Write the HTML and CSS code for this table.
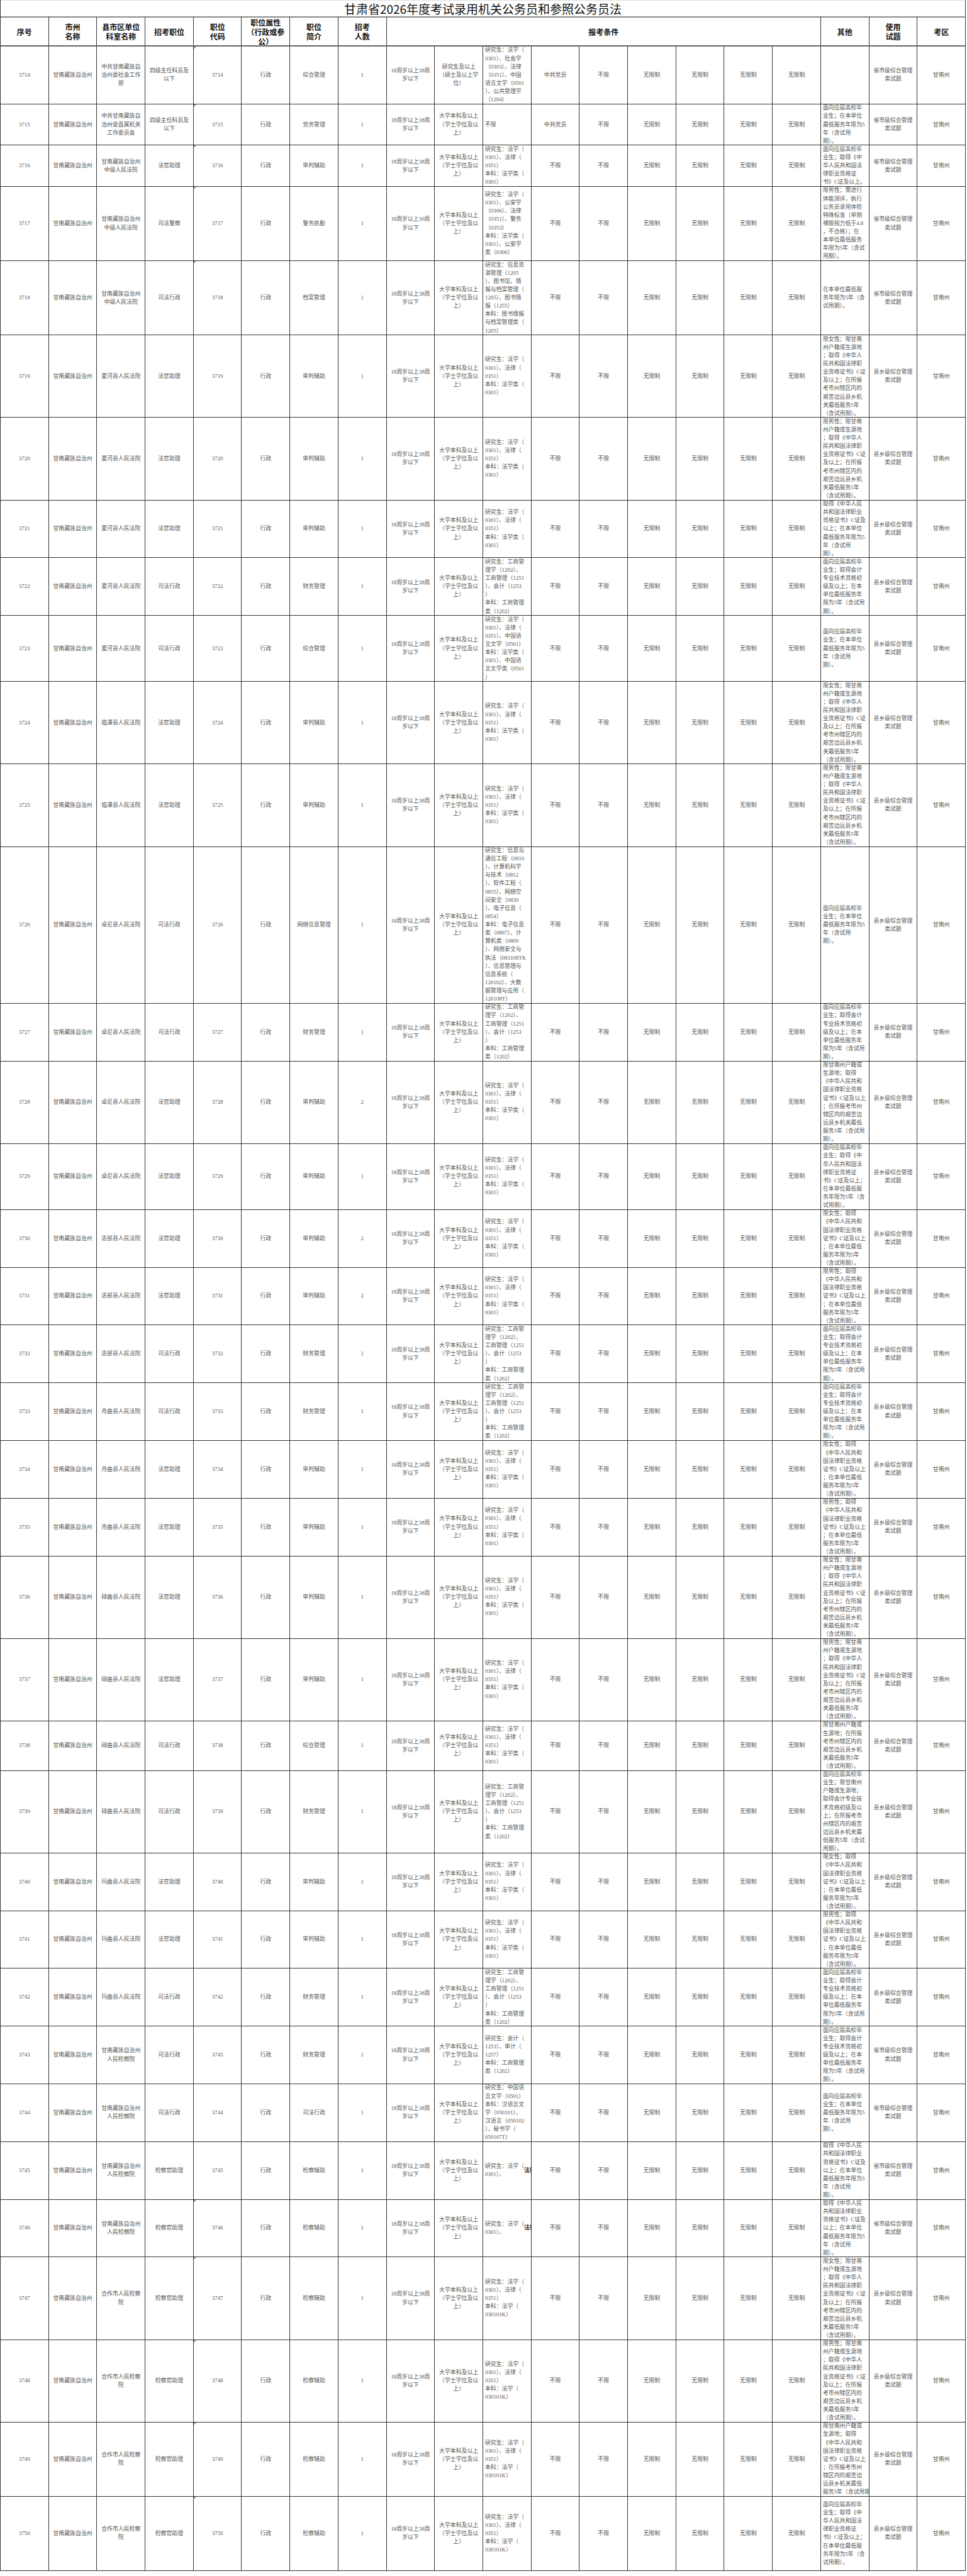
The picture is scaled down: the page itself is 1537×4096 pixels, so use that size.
FILE: index.html
```html
<!DOCTYPE html>
<html lang="zh-CN">
<head>
<meta charset="utf-8">
<title>甘肃省2026年度考试录用机关公务员职位表</title>
<link rel="stylesheet" href="styles.css">
</head>
<body>
<div class="sheet">
<div class="title">甘肃省2026年度考试录用机关公务员和参照公务员法</div>

<div class="row head">
<div class="c">序号</div>
<div class="c">市州<br>名称</div>
<div class="c">县市区单位<br>科室名称</div>
<div class="c">招考职位</div>
<div class="c">职位<br>代码</div>
<div class="c">职位属性<br>（行政或参<br>公）</div>
<div class="c">职位<br>简介</div>
<div class="c">招考<br>人数</div>
<div class="c span9">报考条件</div>
<div class="c">其他</div>
<div class="c">使用<br>试题</div>
<div class="c">考区</div>
</div>

<div class="row l7">
<div class="c">3714</div><div class="c">甘南藏族自治州</div><div class="c">中共甘南藏族自<br>治州委社会工作<br>部</div><div class="c">四级主任科员及<br>以下</div><div class="c tri">3714</div><div class="c">行政</div><div class="c">综合管理</div><div class="c">1</div><div class="c">18周岁以上38周<br>岁以下</div><div class="c">研究生及以上<br>（硕士及以上学<br>位）</div>
<div class="c l">研究生：法学（<br>0301）、社会学<br>（0303）、法律<br>（0351）、中国<br>语言文学（0501<br>）、公共管理学<br>（1204）</div>
<div class="c">中共党员</div><div class="c">不限</div><div class="c">无限制</div><div class="c">无限制</div><div class="c">无限制</div><div class="c">无限制</div>
<div class="c l"></div><div class="c">省市级综合管理<br>类试题</div><div class="c">甘南州</div>
</div>

<div class="row l5">
<div class="c">3715</div><div class="c">甘南藏族自治州</div><div class="c">中共甘南藏族自<br>治州委直属机关<br>工作委员会</div><div class="c">四级主任科员及<br>以下</div><div class="c tri">3715</div><div class="c">行政</div><div class="c">党务管理</div><div class="c">1</div><div class="c">18周岁以上38周<br>岁以下</div><div class="c">大学本科及以上<br>（学士学位及以<br>上）</div>
<div class="c l">不限</div>
<div class="c">中共党员</div><div class="c">不限</div><div class="c">无限制</div><div class="c">无限制</div><div class="c">无限制</div><div class="c">无限制</div>
<div class="c l">面向应届高校毕<br>业生；在本单位<br>最低服务年限为5<br>年（含试用<br>期）。</div><div class="c">省市级综合管理<br>类试题</div><div class="c">甘南州</div>
</div>

<div class="row l5">
<div class="c">3716</div><div class="c">甘南藏族自治州</div><div class="c">甘南藏族自治州<br>中级人民法院</div><div class="c">法官助理</div><div class="c tri">3716</div><div class="c">行政</div><div class="c">审判辅助</div><div class="c">1</div><div class="c">18周岁以上38周<br>岁以下</div><div class="c">大学本科及以上<br>（学士学位及以<br>上）</div>
<div class="c l">研究生：法学（<br>0301）、法律（<br>0351）<br>本科：法学类（<br>0301）</div>
<div class="c">不限</div><div class="c">不限</div><div class="c">无限制</div><div class="c">无限制</div><div class="c">无限制</div><div class="c">无限制</div>
<div class="c l">面向应届高校毕<br>业生；取得《中<br>华人民共和国法<br>律职业资格证<br>书》C证及以上。</div><div class="c">省市级综合管理<br>类试题</div><div class="c">甘南州</div>
</div>

<div class="row l9">
<div class="c">3717</div><div class="c">甘南藏族自治州</div><div class="c">甘南藏族自治州<br>中级人民法院</div><div class="c">司法警察</div><div class="c tri">3717</div><div class="c">行政</div><div class="c">警务执勤</div><div class="c">1</div><div class="c">18周岁以上30周<br>岁以下</div><div class="c">大学本科及以上<br>（学士学位及以<br>上）</div>
<div class="c l">研究生：法学（<br>0301）、公安学<br>（0306）、法律<br>（0351）、警务<br>（0353）<br>本科：法学类（<br>0301）、公安学<br>类（0306）</div>
<div class="c">不限</div><div class="c">不限</div><div class="c">无限制</div><div class="c">无限制</div><div class="c">无限制</div><div class="c">无限制</div>
<div class="c l">限男性；需进行<br>体能测评，执行<br>公务员录用体检<br>特殊标准（单侧<br>裸眼视力低于4.8<br>，不合格）；在<br>本单位最低服务<br>年限为5年（含试<br>用期）。</div><div class="c">省市级综合管理<br>类试题</div><div class="c">甘南州</div>
</div>

<div class="row l9">
<div class="c">3718</div><div class="c">甘南藏族自治州</div><div class="c">甘南藏族自治州<br>中级人民法院</div><div class="c">司法行政</div><div class="c tri">3718</div><div class="c">行政</div><div class="c">档案管理</div><div class="c">1</div><div class="c">18周岁以上38周<br>岁以下</div><div class="c">大学本科及以上<br>（学士学位及以<br>上）</div>
<div class="c l">研究生：信息资<br>源管理（1205<br>）、图书馆、情<br>报与档案管理（<br>1205）、图书情<br>报（1255）<br>本科：图书情报<br>与档案管理类（<br>1205）</div>
<div class="c">不限</div><div class="c">不限</div><div class="c">无限制</div><div class="c">无限制</div><div class="c">无限制</div><div class="c">无限制</div>
<div class="c l">在本单位最低服<br>务年限为5年（含<br>试用期）。</div><div class="c">省市级综合管理<br>类试题</div><div class="c">甘南州</div>
</div>

<div class="row l10">
<div class="c">3719</div><div class="c">甘南藏族自治州</div><div class="c">夏河县人民法院</div><div class="c">法官助理</div><div class="c">3719</div><div class="c">行政</div><div class="c">审判辅助</div><div class="c">1</div><div class="c">18周岁以上38周<br>岁以下</div><div class="c">大学本科及以上<br>（学士学位及以<br>上）</div>
<div class="c l">研究生：法学（<br>0301）、法律（<br>0351）<br>本科：法学类（<br>0301）</div>
<div class="c">不限</div><div class="c">不限</div><div class="c">无限制</div><div class="c">无限制</div><div class="c">无限制</div><div class="c">无限制</div>
<div class="c l">限女性；限甘南<br>州户籍或生源地<br>；取得《中华人<br>民共和国法律职<br>业资格证书》C证<br>及以上；在所报<br>考市州辖区内的<br>艰苦边远县乡机<br>关最低服务5年<br>（含试用期）。</div><div class="c">县乡级综合管理<br>类试题</div><div class="c">甘南州</div>
</div>

<div class="row l10">
<div class="c">3720</div><div class="c">甘南藏族自治州</div><div class="c">夏河县人民法院</div><div class="c">法官助理</div><div class="c">3720</div><div class="c">行政</div><div class="c">审判辅助</div><div class="c">1</div><div class="c">18周岁以上38周<br>岁以下</div><div class="c">大学本科及以上<br>（学士学位及以<br>上）</div>
<div class="c l">研究生：法学（<br>0301）、法律（<br>0351）<br>本科：法学类（<br>0301）</div>
<div class="c">不限</div><div class="c">不限</div><div class="c">无限制</div><div class="c">无限制</div><div class="c">无限制</div><div class="c">无限制</div>
<div class="c l">限男性；限甘南<br>州户籍或生源地<br>；取得《中华人<br>民共和国法律职<br>业资格证书》C证<br>及以上；在所报<br>考市州辖区内的<br>艰苦边远县乡机<br>关最低服务5年<br>（含试用期）。</div><div class="c">县乡级综合管理<br>类试题</div><div class="c">甘南州</div>
</div>

<div class="row l7">
<div class="c">3721</div><div class="c">甘南藏族自治州</div><div class="c">夏河县人民法院</div><div class="c">法官助理</div><div class="c">3721</div><div class="c">行政</div><div class="c">审判辅助</div><div class="c">1</div><div class="c">18周岁以上38周<br>岁以下</div><div class="c">大学本科及以上<br>（学士学位及以<br>上）</div>
<div class="c l">研究生：法学（<br>0301）、法律（<br>0351）<br>本科：法学类（<br>0301）</div>
<div class="c">不限</div><div class="c">不限</div><div class="c">无限制</div><div class="c">无限制</div><div class="c">无限制</div><div class="c">无限制</div>
<div class="c l">取得《中华人民<br>共和国法律职业<br>资格证书》C证及<br>以上；在本单位<br>最低服务年限为5<br>年（含试用<br>期）。</div><div class="c">县乡级综合管理<br>类试题</div><div class="c">甘南州</div>
</div>

<div class="row l7">
<div class="c">3722</div><div class="c">甘南藏族自治州</div><div class="c">夏河县人民法院</div><div class="c">司法行政</div><div class="c">3722</div><div class="c">行政</div><div class="c">财务管理</div><div class="c">1</div><div class="c">18周岁以上38周<br>岁以下</div><div class="c">大学本科及以上<br>（学士学位及以<br>上）</div>
<div class="c l">研究生：工商管<br>理学（1202）、<br>工商管理（1251<br>）、会计（1253<br>）<br>本科：工商管理<br>类（1202）</div>
<div class="c">不限</div><div class="c">不限</div><div class="c">无限制</div><div class="c">无限制</div><div class="c">无限制</div><div class="c">无限制</div>
<div class="c l">面向应届高校毕<br>业生；取得会计<br>专业技术资格初<br>级及以上；在本<br>单位最低服务年<br>限为5年（含试用<br>期）。</div><div class="c">县乡级综合管理<br>类试题</div><div class="c">甘南州</div>
</div>

<div class="row l8">
<div class="c">3723</div><div class="c">甘南藏族自治州</div><div class="c">夏河县人民法院</div><div class="c">司法行政</div><div class="c">3723</div><div class="c">行政</div><div class="c">综合管理</div><div class="c">1</div><div class="c">18周岁以上38周<br>岁以下</div><div class="c">大学本科及以上<br>（学士学位及以<br>上）</div>
<div class="c l">研究生：法学（<br>0301）、法律（<br>0351）、中国语<br>言文学（0501）<br>本科：法学类（<br>0301）、中国语<br>言文学类（0501<br>）</div>
<div class="c">不限</div><div class="c">不限</div><div class="c">无限制</div><div class="c">无限制</div><div class="c">无限制</div><div class="c">无限制</div>
<div class="c l">面向应届高校毕<br>业生；在本单位<br>最低服务年限为5<br>年（含试用<br>期）。</div><div class="c">县乡级综合管理<br>类试题</div><div class="c">甘南州</div>
</div>

<div class="row l10">
<div class="c">3724</div><div class="c">甘南藏族自治州</div><div class="c">临潭县人民法院</div><div class="c">法官助理</div><div class="c">3724</div><div class="c">行政</div><div class="c">审判辅助</div><div class="c">1</div><div class="c">18周岁以上38周<br>岁以下</div><div class="c">大学本科及以上<br>（学士学位及以<br>上）</div>
<div class="c l">研究生：法学（<br>0301）、法律（<br>0351）<br>本科：法学类（<br>0301）</div>
<div class="c">不限</div><div class="c">不限</div><div class="c">无限制</div><div class="c">无限制</div><div class="c">无限制</div><div class="c">无限制</div>
<div class="c l">限女性；限甘南<br>州户籍或生源地<br>；取得《中华人<br>民共和国法律职<br>业资格证书》C证<br>及以上；在所报<br>考市州辖区内的<br>艰苦边远县乡机<br>关最低服务5年<br>（含试用期）。</div><div class="c">县乡级综合管理<br>类试题</div><div class="c">甘南州</div>
</div>

<div class="row l10">
<div class="c">3725</div><div class="c">甘南藏族自治州</div><div class="c">临潭县人民法院</div><div class="c">法官助理</div><div class="c">3725</div><div class="c">行政</div><div class="c">审判辅助</div><div class="c">1</div><div class="c">18周岁以上38周<br>岁以下</div><div class="c">大学本科及以上<br>（学士学位及以<br>上）</div>
<div class="c l">研究生：法学（<br>0301）、法律（<br>0351）<br>本科：法学类（<br>0301）</div>
<div class="c">不限</div><div class="c">不限</div><div class="c">无限制</div><div class="c">无限制</div><div class="c">无限制</div><div class="c">无限制</div>
<div class="c l">限男性；限甘南<br>州户籍或生源地<br>；取得《中华人<br>民共和国法律职<br>业资格证书》C证<br>及以上；在所报<br>考市州辖区内的<br>艰苦边远县乡机<br>关最低服务5年<br>（含试用期）。</div><div class="c">县乡级综合管理<br>类试题</div><div class="c">甘南州</div>
</div>

<div class="row l19">
<div class="c">3726</div><div class="c">甘南藏族自治州</div><div class="c">卓尼县人民法院</div><div class="c">司法行政</div><div class="c">3726</div><div class="c">行政</div><div class="c">网络信息管理</div><div class="c">1</div><div class="c">18周岁以上38周<br>岁以下</div><div class="c">大学本科及以上<br>（学士学位及以<br>上）</div>
<div class="c l">研究生：信息与<br>通信工程（0810<br>）、计算机科学<br>与技术（0812<br>）、软件工程（<br>0835）、网络空<br>间安全（0839<br>）、电子信息（<br>0854）<br>本科：电子信息<br>类（0807）、计<br>算机类（0809<br>）、网络安全与<br>执法（083108TK<br>）、信息管理与<br>信息系统（<br>120102）、大数<br>据管理与应用（<br>120108T）</div>
<div class="c">不限</div><div class="c">不限</div><div class="c">无限制</div><div class="c">无限制</div><div class="c">无限制</div><div class="c">无限制</div>
<div class="c l">面向应届高校毕<br>业生；在本单位<br>最低服务年限为5<br>年（含试用<br>期）。</div><div class="c">县乡级综合管理<br>类试题</div><div class="c">甘南州</div>
</div>

<div class="row l7">
<div class="c">3727</div><div class="c">甘南藏族自治州</div><div class="c">卓尼县人民法院</div><div class="c">司法行政</div><div class="c">3727</div><div class="c">行政</div><div class="c">财务管理</div><div class="c">1</div><div class="c">18周岁以上38周<br>岁以下</div><div class="c">大学本科及以上<br>（学士学位及以<br>上）</div>
<div class="c l">研究生：工商管<br>理学（1202）、<br>工商管理（1251<br>）、会计（1253<br>）<br>本科：工商管理<br>类（1202）</div>
<div class="c">不限</div><div class="c">不限</div><div class="c">无限制</div><div class="c">无限制</div><div class="c">无限制</div><div class="c">无限制</div>
<div class="c l">面向应届高校毕<br>业生；取得会计<br>专业技术资格初<br>级及以上；在本<br>单位最低服务年<br>限为5年（含试用<br>期）。</div><div class="c">县乡级综合管理<br>类试题</div><div class="c">甘南州</div>
</div>

<div class="row l10">
<div class="c">3728</div><div class="c">甘南藏族自治州</div><div class="c">卓尼县人民法院</div><div class="c">法官助理</div><div class="c">3728</div><div class="c">行政</div><div class="c">审判辅助</div><div class="c">2</div><div class="c">18周岁以上38周<br>岁以下</div><div class="c">大学本科及以上<br>（学士学位及以<br>上）</div>
<div class="c l">研究生：法学（<br>0301）、法律（<br>0351）<br>本科：法学类（<br>0301）</div>
<div class="c">不限</div><div class="c">不限</div><div class="c">无限制</div><div class="c">无限制</div><div class="c">无限制</div><div class="c">无限制</div>
<div class="c l">限甘南州户籍或<br>生源地；取得<br>《中华人民共和<br>国法律职业资格<br>证书》C证及以上<br>；在所报考市州<br>辖区内的艰苦边<br>远县乡机关最低<br>服务5年（含试用<br>期）。</div><div class="c">县乡级综合管理<br>类试题</div><div class="c">甘南州</div>
</div>

<div class="row l8">
<div class="c">3729</div><div class="c">甘南藏族自治州</div><div class="c">卓尼县人民法院</div><div class="c">法官助理</div><div class="c">3729</div><div class="c">行政</div><div class="c">审判辅助</div><div class="c">1</div><div class="c">18周岁以上38周<br>岁以下</div><div class="c">大学本科及以上<br>（学士学位及以<br>上）</div>
<div class="c l">研究生：法学（<br>0301）、法律（<br>0351）<br>本科：法学类（<br>0301）</div>
<div class="c">不限</div><div class="c">不限</div><div class="c">无限制</div><div class="c">无限制</div><div class="c">无限制</div><div class="c">无限制</div>
<div class="c l">面向应届高校毕<br>业生；取得《中<br>华人民共和国法<br>律职业资格证<br>书》C证及以上；<br>在本单位最低服<br>务年限为5年（含<br>试用期）。</div><div class="c">县乡级综合管理<br>类试题</div><div class="c">甘南州</div>
</div>

<div class="row l7">
<div class="c">3730</div><div class="c">甘南藏族自治州</div><div class="c">迭部县人民法院</div><div class="c">法官助理</div><div class="c">3730</div><div class="c">行政</div><div class="c">审判辅助</div><div class="c">2</div><div class="c">18周岁以上38周<br>岁以下</div><div class="c">大学本科及以上<br>（学士学位及以<br>上）</div>
<div class="c l">研究生：法学（<br>0301）、法律（<br>0351）<br>本科：法学类（<br>0301）</div>
<div class="c">不限</div><div class="c">不限</div><div class="c">无限制</div><div class="c">无限制</div><div class="c">无限制</div><div class="c">无限制</div>
<div class="c l">限女性；取得<br>《中华人民共和<br>国法律职业资格<br>证书》C证及以上<br>；在本单位最低<br>服务年限为5年<br>（含试用期）。</div><div class="c">县乡级综合管理<br>类试题</div><div class="c">甘南州</div>
</div>

<div class="row l7">
<div class="c">3731</div><div class="c">甘南藏族自治州</div><div class="c">迭部县人民法院</div><div class="c">法官助理</div><div class="c">3731</div><div class="c">行政</div><div class="c">审判辅助</div><div class="c">2</div><div class="c">18周岁以上38周<br>岁以下</div><div class="c">大学本科及以上<br>（学士学位及以<br>上）</div>
<div class="c l">研究生：法学（<br>0301）、法律（<br>0351）<br>本科：法学类（<br>0301）</div>
<div class="c">不限</div><div class="c">不限</div><div class="c">无限制</div><div class="c">无限制</div><div class="c">无限制</div><div class="c">无限制</div>
<div class="c l">限男性；取得<br>《中华人民共和<br>国法律职业资格<br>证书》C证及以上<br>；在本单位最低<br>服务年限为5年<br>（含试用期）。</div><div class="c">县乡级综合管理<br>类试题</div><div class="c">甘南州</div>
</div>

<div class="row l7">
<div class="c">3732</div><div class="c">甘南藏族自治州</div><div class="c">迭部县人民法院</div><div class="c">司法行政</div><div class="c">3732</div><div class="c">行政</div><div class="c">财务管理</div><div class="c">1</div><div class="c">18周岁以上38周<br>岁以下</div><div class="c">大学本科及以上<br>（学士学位及以<br>上）</div>
<div class="c l">研究生：工商管<br>理学（1202）、<br>工商管理（1251<br>）、会计（1253<br>）<br>本科：工商管理<br>类（1202）</div>
<div class="c">不限</div><div class="c">不限</div><div class="c">无限制</div><div class="c">无限制</div><div class="c">无限制</div><div class="c">无限制</div>
<div class="c l">面向应届高校毕<br>业生；取得会计<br>专业技术资格初<br>级及以上；在本<br>单位最低服务年<br>限为5年（含试用<br>期）。</div><div class="c">县乡级综合管理<br>类试题</div><div class="c">甘南州</div>
</div>

<div class="row l7">
<div class="c">3733</div><div class="c">甘南藏族自治州</div><div class="c">舟曲县人民法院</div><div class="c">司法行政</div><div class="c">3733</div><div class="c">行政</div><div class="c">财务管理</div><div class="c">1</div><div class="c">18周岁以上38周<br>岁以下</div><div class="c">大学本科及以上<br>（学士学位及以<br>上）</div>
<div class="c l">研究生：工商管<br>理学（1202）、<br>工商管理（1251<br>）、会计（1253<br>）<br>本科：工商管理<br>类（1202）</div>
<div class="c">不限</div><div class="c">不限</div><div class="c">无限制</div><div class="c">无限制</div><div class="c">无限制</div><div class="c">无限制</div>
<div class="c l">面向应届高校毕<br>业生；取得会计<br>专业技术资格初<br>级及以上；在本<br>单位最低服务年<br>限为5年（含试用<br>期）。</div><div class="c">县乡级综合管理<br>类试题</div><div class="c">甘南州</div>
</div>

<div class="row l7">
<div class="c">3734</div><div class="c">甘南藏族自治州</div><div class="c">舟曲县人民法院</div><div class="c">法官助理</div><div class="c">3734</div><div class="c">行政</div><div class="c">审判辅助</div><div class="c">1</div><div class="c">18周岁以上38周<br>岁以下</div><div class="c">大学本科及以上<br>（学士学位及以<br>上）</div>
<div class="c l">研究生：法学（<br>0301）、法律（<br>0351）<br>本科：法学类（<br>0301）</div>
<div class="c">不限</div><div class="c">不限</div><div class="c">无限制</div><div class="c">无限制</div><div class="c">无限制</div><div class="c">无限制</div>
<div class="c l">限女性；取得<br>《中华人民共和<br>国法律职业资格<br>证书》C证及以上<br>；在本单位最低<br>服务年限为5年<br>（含试用期）。</div><div class="c">县乡级综合管理<br>类试题</div><div class="c">甘南州</div>
</div>

<div class="row l7">
<div class="c">3735</div><div class="c">甘南藏族自治州</div><div class="c">舟曲县人民法院</div><div class="c">法官助理</div><div class="c">3735</div><div class="c">行政</div><div class="c">审判辅助</div><div class="c">1</div><div class="c">18周岁以上38周<br>岁以下</div><div class="c">大学本科及以上<br>（学士学位及以<br>上）</div>
<div class="c l">研究生：法学（<br>0301）、法律（<br>0351）<br>本科：法学类（<br>0301）</div>
<div class="c">不限</div><div class="c">不限</div><div class="c">无限制</div><div class="c">无限制</div><div class="c">无限制</div><div class="c">无限制</div>
<div class="c l">限男性；取得<br>《中华人民共和<br>国法律职业资格<br>证书》C证及以上<br>；在本单位最低<br>服务年限为5年<br>（含试用期）。</div><div class="c">县乡级综合管理<br>类试题</div><div class="c">甘南州</div>
</div>

<div class="row l10">
<div class="c">3736</div><div class="c">甘南藏族自治州</div><div class="c">碌曲县人民法院</div><div class="c">法官助理</div><div class="c">3736</div><div class="c">行政</div><div class="c">审判辅助</div><div class="c">1</div><div class="c">18周岁以上38周<br>岁以下</div><div class="c">大学本科及以上<br>（学士学位及以<br>上）</div>
<div class="c l">研究生：法学（<br>0301）、法律（<br>0351）<br>本科：法学类（<br>0301）</div>
<div class="c">不限</div><div class="c">不限</div><div class="c">无限制</div><div class="c">无限制</div><div class="c">无限制</div><div class="c">无限制</div>
<div class="c l">限女性；限甘南<br>州户籍或生源地<br>；取得《中华人<br>民共和国法律职<br>业资格证书》C证<br>及以上；在所报<br>考市州辖区内的<br>艰苦边远县乡机<br>关最低服务5年<br>（含试用期）。</div><div class="c">县乡级综合管理<br>类试题</div><div class="c">甘南州</div>
</div>

<div class="row l10">
<div class="c">3737</div><div class="c">甘南藏族自治州</div><div class="c">碌曲县人民法院</div><div class="c">法官助理</div><div class="c">3737</div><div class="c">行政</div><div class="c">审判辅助</div><div class="c">1</div><div class="c">18周岁以上38周<br>岁以下</div><div class="c">大学本科及以上<br>（学士学位及以<br>上）</div>
<div class="c l">研究生：法学（<br>0301）、法律（<br>0351）<br>本科：法学类（<br>0301）</div>
<div class="c">不限</div><div class="c">不限</div><div class="c">无限制</div><div class="c">无限制</div><div class="c">无限制</div><div class="c">无限制</div>
<div class="c l">限男性；限甘南<br>州户籍或生源地<br>；取得《中华人<br>民共和国法律职<br>业资格证书》C证<br>及以上；在所报<br>考市州辖区内的<br>艰苦边远县乡机<br>关最低服务5年<br>（含试用期）。</div><div class="c">县乡级综合管理<br>类试题</div><div class="c">甘南州</div>
</div>

<div class="row l6">
<div class="c">3738</div><div class="c">甘南藏族自治州</div><div class="c">碌曲县人民法院</div><div class="c">司法行政</div><div class="c">3738</div><div class="c">行政</div><div class="c">综合管理</div><div class="c">1</div><div class="c">18周岁以上38周<br>岁以下</div><div class="c">大学本科及以上<br>（学士学位及以<br>上）</div>
<div class="c l">研究生：法学（<br>0301）、法律（<br>0351）<br>本科：法学类（<br>0301）</div>
<div class="c">不限</div><div class="c">不限</div><div class="c">无限制</div><div class="c">无限制</div><div class="c">无限制</div><div class="c">无限制</div>
<div class="c l">限甘南州户籍或<br>生源地；在所报<br>考市州辖区内的<br>艰苦边远县乡机<br>关最低服务5年<br>（含试用期）。</div><div class="c">县乡级综合管理<br>类试题</div><div class="c">甘南州</div>
</div>

<div class="row l10">
<div class="c">3739</div><div class="c">甘南藏族自治州</div><div class="c">碌曲县人民法院</div><div class="c">司法行政</div><div class="c">3739</div><div class="c">行政</div><div class="c">财务管理</div><div class="c">1</div><div class="c">18周岁以上38周<br>岁以下</div><div class="c">大学本科及以上<br>（学士学位及以<br>上）</div>
<div class="c l">研究生：工商管<br>理学（1202）、<br>工商管理（1251<br>）、会计（1253<br>）<br>本科：工商管理<br>类（1202）</div>
<div class="c">不限</div><div class="c">不限</div><div class="c">无限制</div><div class="c">无限制</div><div class="c">无限制</div><div class="c">无限制</div>
<div class="c l">面向应届高校毕<br>业生；限甘南州<br>户籍或生源地；<br>取得会计专业技<br>术资格初级及以<br>上；在所报考市<br>州辖区内的艰苦<br>边远县乡机关最<br>低服务5年（含试<br>用期）。</div><div class="c">县乡级综合管理<br>类试题</div><div class="c">甘南州</div>
</div>

<div class="row l7">
<div class="c">3740</div><div class="c">甘南藏族自治州</div><div class="c">玛曲县人民法院</div><div class="c">法官助理</div><div class="c">3740</div><div class="c">行政</div><div class="c">审判辅助</div><div class="c">1</div><div class="c">18周岁以上38周<br>岁以下</div><div class="c">大学本科及以上<br>（学士学位及以<br>上）</div>
<div class="c l">研究生：法学（<br>0301）、法律（<br>0351）<br>本科：法学类（<br>0301）</div>
<div class="c">不限</div><div class="c">不限</div><div class="c">无限制</div><div class="c">无限制</div><div class="c">无限制</div><div class="c">无限制</div>
<div class="c l">限女性；取得<br>《中华人民共和<br>国法律职业资格<br>证书》C证及以上<br>；在本单位最低<br>服务年限为5年<br>（含试用期）。</div><div class="c">县乡级综合管理<br>类试题</div><div class="c">甘南州</div>
</div>

<div class="row l7">
<div class="c">3741</div><div class="c">甘南藏族自治州</div><div class="c">玛曲县人民法院</div><div class="c">法官助理</div><div class="c">3741</div><div class="c">行政</div><div class="c">审判辅助</div><div class="c">1</div><div class="c">18周岁以上38周<br>岁以下</div><div class="c">大学本科及以上<br>（学士学位及以<br>上）</div>
<div class="c l">研究生：法学（<br>0301）、法律（<br>0351）<br>本科：法学类（<br>0301）</div>
<div class="c">不限</div><div class="c">不限</div><div class="c">无限制</div><div class="c">无限制</div><div class="c">无限制</div><div class="c">无限制</div>
<div class="c l">限男性；取得<br>《中华人民共和<br>国法律职业资格<br>证书》C证及以上<br>；在本单位最低<br>服务年限为5年<br>（含试用期）。</div><div class="c">县乡级综合管理<br>类试题</div><div class="c">甘南州</div>
</div>

<div class="row l7">
<div class="c">3742</div><div class="c">甘南藏族自治州</div><div class="c">玛曲县人民法院</div><div class="c">司法行政</div><div class="c">3742</div><div class="c">行政</div><div class="c">财务管理</div><div class="c">1</div><div class="c">18周岁以上38周<br>岁以下</div><div class="c">大学本科及以上<br>（学士学位及以<br>上）</div>
<div class="c l">研究生：工商管<br>理学（1202）、<br>工商管理（1251<br>）、会计（1253<br>）<br>本科：工商管理<br>类（1202）</div>
<div class="c">不限</div><div class="c">不限</div><div class="c">无限制</div><div class="c">无限制</div><div class="c">无限制</div><div class="c">无限制</div>
<div class="c l">面向应届高校毕<br>业生；取得会计<br>专业技术资格初<br>级及以上；在本<br>单位最低服务年<br>限为5年（含试用<br>期）。</div><div class="c">县乡级综合管理<br>类试题</div><div class="c">甘南州</div>
</div>

<div class="row l7">
<div class="c">3743</div><div class="c">甘南藏族自治州</div><div class="c">甘南藏族自治州<br>人民检察院</div><div class="c">司法行政</div><div class="c">3743</div><div class="c">行政</div><div class="c">财务管理</div><div class="c">1</div><div class="c">18周岁以上38周<br>岁以下</div><div class="c">大学本科及以上<br>（学士学位及以<br>上）</div>
<div class="c l">研究生：会计（<br>1253）、审计（<br>1257）<br>本科：工商管理<br>类（1202）</div>
<div class="c">不限</div><div class="c">不限</div><div class="c">无限制</div><div class="c">无限制</div><div class="c">无限制</div><div class="c">无限制</div>
<div class="c l">面向应届高校毕<br>业生；取得会计<br>专业技术资格初<br>级及以上；在本<br>单位最低服务年<br>限为5年（含试用<br>期）。</div><div class="c">省市级综合管理<br>类试题</div><div class="c">甘南州</div>
</div>

<div class="row l7">
<div class="c">3744</div><div class="c">甘南藏族自治州</div><div class="c">甘南藏族自治州<br>人民检察院</div><div class="c">司法行政</div><div class="c">3744</div><div class="c">行政</div><div class="c">司法行政</div><div class="c">1</div><div class="c">18周岁以上38周<br>岁以下</div><div class="c">大学本科及以上<br>（学士学位及以<br>上）</div>
<div class="c l">研究生：中国语<br>言文学（0501）<br>本科：汉语言文<br>学（050101）、<br>汉语言（050102<br>）、秘书学（<br>050107T）</div>
<div class="c">不限</div><div class="c">不限</div><div class="c">无限制</div><div class="c">无限制</div><div class="c">无限制</div><div class="c">无限制</div>
<div class="c l">面向应届高校毕<br>业生；在本单位<br>最低服务年限为5<br>年（含试用<br>期）。</div><div class="c">省市级综合管理<br>类试题</div><div class="c">甘南州</div>
</div>

<div class="row l7">
<div class="c">3745</div><div class="c">甘南藏族自治州</div><div class="c">甘南藏族自治州<br>人民检察院</div><div class="c">检察官助理</div><div class="c">3745</div><div class="c">行政</div><div class="c">检察辅助</div><div class="c">1</div><div class="c">18周岁以上38周<br>岁以下</div><div class="c">大学本科及以上<br>（学士学位及以<br>上）</div>
<div class="c l">研究生：法学（<br>0301）、<span class="dk">法律（</span><br>0351）<br><span class="dk">本科：法学（藏<br>汉双语）（<br>030101K）</span></div>
<div class="c">不限</div><div class="c">不限</div><div class="c">无限制</div><div class="c">无限制</div><div class="c">无限制</div><div class="c">无限制</div>
<div class="c l">取得《中华人民<br>共和国法律职业<br>资格证书》C证及<br>以上；在本单位<br>最低服务年限为5<br>年（含试用<br>期）。</div><div class="c">省市级综合管理<br>类试题</div><div class="c">甘南州</div>
</div>

<div class="row l7">
<div class="c">3746</div><div class="c">甘南藏族自治州</div><div class="c">甘南藏族自治州<br>人民检察院</div><div class="c">检察官助理</div><div class="c tri">3746</div><div class="c">行政</div><div class="c">检察辅助</div><div class="c">1</div><div class="c">18周岁以上38周<br>岁以下</div><div class="c">大学本科及以上<br>（学士学位及以<br>上）</div>
<div class="c l">研究生：法学（<br>0301）、<span class="dk">法律（</span><br>0351）<br><span class="dk">本科：法学（藏<br>汉双语）（<br>030101K）</span></div>
<div class="c">不限</div><div class="c">不限</div><div class="c">无限制</div><div class="c">无限制</div><div class="c">无限制</div><div class="c">无限制</div>
<div class="c l">取得《中华人民<br>共和国法律职业<br>资格证书》C证及<br>以上；在本单位<br>最低服务年限为5<br>年（含试用<br>期）。</div><div class="c">省市级综合管理<br>类试题</div><div class="c">甘南州</div>
</div>

<div class="row l10">
<div class="c">3747</div><div class="c">甘南藏族自治州</div><div class="c">合作市人民检察<br>院</div><div class="c">检察官助理</div><div class="c tri">3747</div><div class="c">行政</div><div class="c">检察辅助</div><div class="c">1</div><div class="c">18周岁以上38周<br>岁以下</div><div class="c">大学本科及以上<br>（学士学位及以<br>上）</div>
<div class="c l">研究生：法学（<br>0301）、法律（<br>0351）<br>本科：法学（<br>030101K）</div>
<div class="c">不限</div><div class="c">不限</div><div class="c">无限制</div><div class="c">无限制</div><div class="c">无限制</div><div class="c">无限制</div>
<div class="c l">限女性；限甘南<br>州户籍或生源地<br>；取得《中华人<br>民共和国法律职<br>业资格证书》C证<br>及以上；在所报<br>考市州辖区内的<br>艰苦边远县乡机<br>关最低服务5年<br>（含试用期）。</div><div class="c">县乡级综合管理<br>类试题</div><div class="c">甘南州</div>
</div>

<div class="row l10">
<div class="c">3748</div><div class="c">甘南藏族自治州</div><div class="c">合作市人民检察<br>院</div><div class="c">检察官助理</div><div class="c tri">3748</div><div class="c">行政</div><div class="c">检察辅助</div><div class="c">1</div><div class="c">18周岁以上38周<br>岁以下</div><div class="c">大学本科及以上<br>（学士学位及以<br>上）</div>
<div class="c l">研究生：法学（<br>0301）、法律（<br>0351）<br>本科：法学（<br>030101K）</div>
<div class="c">不限</div><div class="c">不限</div><div class="c">无限制</div><div class="c">无限制</div><div class="c">无限制</div><div class="c">无限制</div>
<div class="c l">限男性；限甘南<br>州户籍或生源地<br>；取得《中华人<br>民共和国法律职<br>业资格证书》C证<br>及以上；在所报<br>考市州辖区内的<br>艰苦边远县乡机<br>关最低服务5年<br>（含试用期）。</div><div class="c">县乡级综合管理<br>类试题</div><div class="c">甘南州</div>
</div>

<div class="row l9">
<div class="c">3749</div><div class="c">甘南藏族自治州</div><div class="c">合作市人民检察<br>院</div><div class="c">检察官助理</div><div class="c tri">3749</div><div class="c">行政</div><div class="c">检察辅助</div><div class="c">1</div><div class="c">18周岁以上38周<br>岁以下</div><div class="c">大学本科及以上<br>（学士学位及以<br>上）</div>
<div class="c l">研究生：法学（<br>0301）、法律（<br>0351）<br>本科：法学（<br>030101K）</div>
<div class="c">不限</div><div class="c">不限</div><div class="c">无限制</div><div class="c">无限制</div><div class="c">无限制</div><div class="c">无限制</div>
<div class="c l">限甘南州户籍或<br>生源地；取得<br>《中华人民共和<br>国法律职业资格<br>证书》C证及以上<br>；在所报考市州<br>辖区内的艰苦边<br>远县乡机关最低<br>服务5年（含试用期）。</div><div class="c">县乡级综合管理<br>类试题</div><div class="c">甘南州</div>
</div>

<div class="row l9">
<div class="c">3750</div><div class="c">甘南藏族自治州</div><div class="c">合作市人民检察<br>院</div><div class="c">检察官助理</div><div class="c tri">3750</div><div class="c">行政</div><div class="c">检察辅助</div><div class="c">1</div><div class="c">18周岁以上38周<br>岁以下</div><div class="c">大学本科及以上<br>（学士学位及以<br>上）</div>
<div class="c l">研究生：法学（<br>0301）、法律（<br>0351）<br>本科：法学（<br>030101K）</div>
<div class="c">不限</div><div class="c">不限</div><div class="c">无限制</div><div class="c">无限制</div><div class="c">无限制</div><div class="c">无限制</div>
<div class="c l">面向应届高校毕<br>业生；取得《中<br>华人民共和国法<br>律职业资格证<br>书》C证及以上；<br>在本单位最低服<br>务年限为5年（含<br>试用期）。</div><div class="c">县乡级综合管理<br>类试题</div><div class="c">甘南州</div>
</div>

</div>
</body>
</html>
```

FILE: styles.css
```css
* {
  box-sizing: border-box;
  margin: 0;
  padding: 0;
}

body {
  background: #ffffff;
}

.sheet {
  width: 1535px;
  border-left: 1px solid #333333;
  font-family: "Liberation Serif", "Noto Sans CJK SC", serif;
}

.title {
  height: 26px;
  display: flex;
  justify-content: center;
  align-items: center;
  font-family: "Noto Sans CJK SC", sans-serif;
  font-size: 19px;
  line-height: 26px;
  color: #111111;
  border-right: 1px solid #333333;
  border-top: 1px solid #dddddd;
}

.row {
  display: grid;
  grid-template-columns: repeat(20, 1fr);
}

.c {
  position: relative;
  display: flex;
  align-items: center;
  justify-content: center;
  text-align: center;
  white-space: nowrap;
  overflow: hidden;
  border-right: 1px solid #333333;
  border-bottom: 1px solid #333333;
  font-size: 8.9px;
  line-height: 13.12px;
  color: #555555;
}

.c.l {
  justify-content: flex-start;
  text-align: left;
  padding-left: 3px;
}

.head {
  height: 48px;
}

.head .c {
  font-family: "Noto Sans CJK SC", sans-serif;
  font-weight: 700;
  font-size: 12px;
  line-height: 15px;
  color: #111111;
  border-top: 2px solid #8a8a8a;
  border-bottom: 2px solid #666666;
}

.span9 {
  grid-column: span 9;
}

.tri::before {
  content: "";
  position: absolute;
  left: 0;
  top: 0;
  border-top: 4px solid #8c8c8c;
  border-right: 4px solid transparent;
}

.dk {
  color: #222222;
  font-weight: 700;
}

.l5 { height: 65.6px; }
.l6 { height: 78.7px; }
.l7 { height: 91.8px; }
.l8 { height: 105px; }
.l9 { height: 118.1px; }
.l10 { height: 131.2px; }
.l19 { height: 249.3px; }
```
